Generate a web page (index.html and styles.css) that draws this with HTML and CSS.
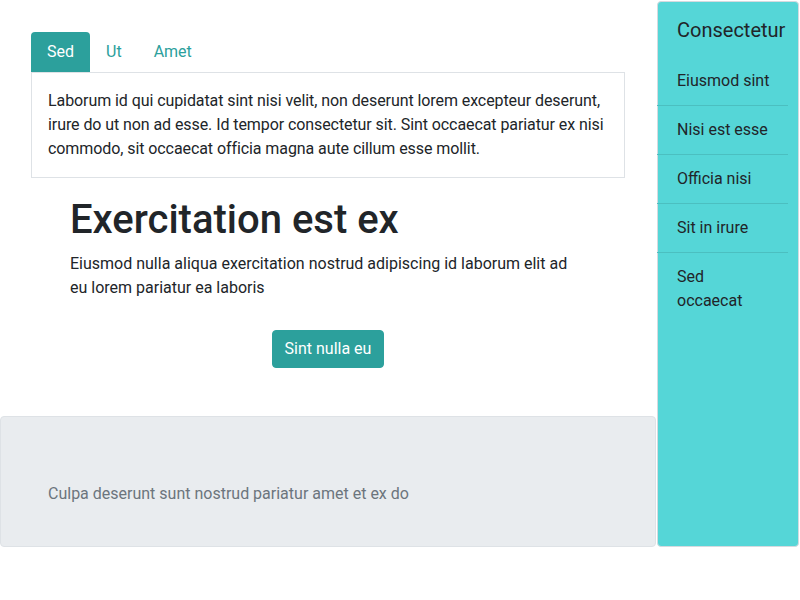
FILE: index.html
```html
<!DOCTYPE html>
<html lang="en">
<head>
<meta charset="utf-8">
<title>Page</title>
<link rel="stylesheet" href="styles.css">
</head>
<body>
<div class="layout">
  <main class="main">
    <section class="tabs-area">
      <nav class="tabs">
        <a class="tab active" href="#">Sed</a>
        <a class="tab" href="#">Ut</a>
        <a class="tab" href="#">Amet</a>
      </nav>
      <div class="tab-content">
        Laborum id qui cupidatat sint nisi velit, non deserunt lorem excepteur deserunt, irure do ut non ad esse. Id tempor consectetur sit. Sint occaecat pariatur ex nisi commodo, sit occaecat officia magna aute cillum esse mollit.
      </div>
    </section>
    <section class="hero">
      <h1 class="hero-title">Exercitation est ex</h1>
      <p class="hero-text">Eiusmod nulla aliqua exercitation nostrud adipiscing id laborum elit ad eu lorem pariatur ea laboris</p>
      <div class="hero-action">
        <button class="btn" type="button">Sint nulla eu</button>
      </div>
    </section>
    <footer class="footer-box">
      <p class="footer-text">Culpa deserunt sunt nostrud pariatur amet et ex do</p>
    </footer>
  </main>
  <aside class="sidebar">
    <h2 class="sidebar-title">Consectetur</h2>
    <ul class="side-list">
      <li class="side-item">Eiusmod sint</li>
      <li class="side-item">Nisi est esse</li>
      <li class="side-item">Officia nisi</li>
      <li class="side-item">Sit in irure</li>
      <li class="side-item">Sed occaecat</li>
    </ul>
  </aside>
</div>
</body>
</html>
```
FILE: styles.css
```css
* { box-sizing: border-box; }

body {
  margin: 0;
  font-family: Roboto, "Liberation Sans", sans-serif;
  font-size: 16px;
  line-height: 24px;
  color: #212529;
  background: #fff;
}

.layout {
  display: flex;
  align-items: stretch;
  width: 800px;
}

.main {
  width: 656px;
  flex: none;
  display: flex;
  flex-direction: column;
  padding-top: 32px;
}

.tabs-area {
  padding: 0 31px;
}

.tabs {
  display: flex;
}

.tab {
  display: block;
  padding: 8px 16px;
  color: #2ca09c;
  text-decoration: none;
  border-radius: 4px 4px 0 0;
}

.tab.active {
  background: #2ca09c;
  color: #fff;
}

.tab-content {
  border: 1px solid #dee2e6;
  padding: 16px;
  letter-spacing: -0.08px;
}

.hero {
  padding: 18px 70px 0;
}

.hero-title {
  margin: 0 0 8px;
  font-size: 40px;
  line-height: 48px;
  font-weight: 500;
  color: #212529;
}

.hero-text {
  margin: 0;
  max-width: 516px;
}

.hero-action {
  display: flex;
  justify-content: center;
  margin-top: 30px;
}

.btn {
  font-family: inherit;
  font-size: 16px;
  line-height: 24px;
  padding: 6px 12px;
  border: 1px solid #2ca09c;
  border-radius: 4px;
  background: #2ca09c;
  color: #fff;
  cursor: pointer;
}

.footer-box {
  margin-top: 48px;
  background: #e9ecef;
  border: 1px solid #dee2e6;
  border-radius: 4px;
  padding: 65px 47px 40px;
}

.footer-text {
  margin: 0;
  color: #6c757d;
}

.sidebar {
  width: 142px;
  flex: none;
  margin: 1px 1px 0 1px;
  background: #55d6d7;
  border: 1px solid #d5dadf;
  border-radius: 4px;
  padding-top: 16px;
}

.sidebar-title {
  margin: 0 0 15px;
  padding-left: 19px;
  font-size: 20px;
  line-height: 24px;
  font-weight: 400;
  color: #212529;
}

.side-list {
  list-style: none;
  margin: 0 10px 0 -1px;
  padding: 0;
}

.side-item {
  padding: 12px 16px 12px 20px;
  border-bottom: 1px solid #4bbfc0;
}

.side-item:last-child {
  border-bottom: none;
}
```
